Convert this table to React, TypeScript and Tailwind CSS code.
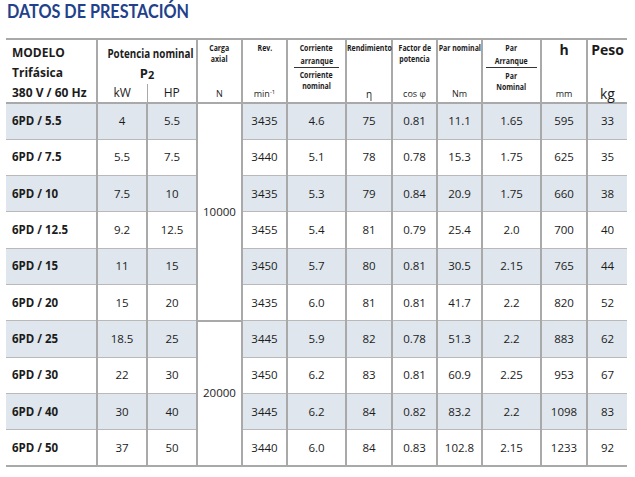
import React from 'react';

type Row = {
  model: string;
  kw: string;
  hp: string;
  rev: string;
  corr: string;
  rend: string;
  cos: string;
  par: string;
  arr: string;
  h: string;
  peso: string;
};

const ROWS: Row[] = [
  { model: '6PD / 5.5', kw: '4', hp: '5.5', rev: '3435', corr: '4.6', rend: '75', cos: '0.81', par: '11.1', arr: '1.65', h: '595', peso: '33' },
  { model: '6PD / 7.5', kw: '5.5', hp: '7.5', rev: '3440', corr: '5.1', rend: '78', cos: '0.78', par: '15.3', arr: '1.75', h: '625', peso: '35' },
  { model: '6PD / 10', kw: '7.5', hp: '10', rev: '3435', corr: '5.3', rend: '79', cos: '0.84', par: '20.9', arr: '1.75', h: '660', peso: '38' },
  { model: '6PD / 12.5', kw: '9.2', hp: '12.5', rev: '3455', corr: '5.4', rend: '81', cos: '0.79', par: '25.4', arr: '2.0', h: '700', peso: '40' },
  { model: '6PD / 15', kw: '11', hp: '15', rev: '3450', corr: '5.7', rend: '80', cos: '0.81', par: '30.5', arr: '2.15', h: '765', peso: '44' },
  { model: '6PD / 20', kw: '15', hp: '20', rev: '3435', corr: '6.0', rend: '81', cos: '0.81', par: '41.7', arr: '2.2', h: '820', peso: '52' },
  { model: '6PD / 25', kw: '18.5', hp: '25', rev: '3445', corr: '5.9', rend: '82', cos: '0.78', par: '51.3', arr: '2.2', h: '883', peso: '62' },
  { model: '6PD / 30', kw: '22', hp: '30', rev: '3450', corr: '6.2', rend: '83', cos: '0.81', par: '60.9', arr: '2.25', h: '953', peso: '67' },
  { model: '6PD / 40', kw: '30', hp: '40', rev: '3445', corr: '6.2', rend: '84', cos: '0.82', par: '83.2', arr: '2.2', h: '1098', peso: '83' },
  { model: '6PD / 50', kw: '37', hp: '50', rev: '3440', corr: '6.0', rend: '84', cos: '0.83', par: '102.8', arr: '2.15', h: '1233', peso: '92' },
];

const vline = 'border-l-2 border-[#a9a9a9]';
const cell = `${vline} text-center align-middle`;

// condensed bold label (the print uses a condensed face)
const Label: React.FC<{ children: React.ReactNode; className?: string }> = ({ children, className = '' }) => (
  <span className={`inline-block whitespace-nowrap scale-x-[0.82] font-bold text-[8.5px] leading-[11px] ${className}`}>
    {children}
  </span>
);

const App: React.FC = () => {
  return (
    <div className="w-[635px] h-[477px] bg-white overflow-hidden font-['Open_Sans',sans-serif] text-[#1c1c1c]">
      <h1 className="pl-[7px] pt-[1px] h-[21px] font-['Lato',sans-serif] text-[18px] leading-[20px] font-bold text-[#22418a]">
        <span className="inline-block whitespace-nowrap origin-left scale-x-[0.9]">DATOS DE PRESTACIÓN</span>
      </h1>

      <table className="ml-[6px] mt-[17px] w-[621px] border-collapse table-fixed border-t-2 border-b-2 border-[#a9a9a9] leading-[14px]">
        <colgroup>
          <col className="w-[91px]" />
          <col className="w-[50px]" />
          <col className="w-[50px]" />
          <col className="w-[45px]" />
          <col className="w-[45px]" />
          <col className="w-[59px]" />
          <col className="w-[46px]" />
          <col className="w-[45px]" />
          <col className="w-[45px]" />
          <col className="w-[59px]" />
          <col className="w-[46px]" />
          <col className="w-[40px]" />
        </colgroup>
        <thead>
          <tr className="h-[43px] align-top">
            <td className="pl-[6px] pt-[3px] text-[12px] leading-[20px] font-bold">
              <div>MODELO</div>
              <div>Trifásica</div>
            </td>
            <td colSpan={2} className={`${vline} text-center pt-[3px]`}>
              <div className="leading-[18px]">
                <Label className="text-[12px] leading-[18px] scale-x-[0.82]">Potencia nominal</Label>
              </div>
              <div className="text-[13px] leading-[20px] font-bold">
                P<span className="text-[11px] relative top-[1px]">2</span>
              </div>
            </td>
            <td className={`${vline} pt-[2px]`}>
              <div className="flex flex-col items-center">
                <Label>Carga</Label>
                <Label>axial</Label>
              </div>
            </td>
            <td className={`${vline} pt-[2px]`}>
              <div className="flex flex-col items-center">
                <Label>Rev.</Label>
              </div>
            </td>
            <td rowSpan={2} className={`${vline} align-top pt-[2px]`}>
              <div className="flex flex-col items-center">
                <Label>Corriente</Label>
                <span className="border-b border-[#333] px-[3px] leading-[11px] pb-[1px]">
                  <Label>arranque</Label>
                </span>
                <Label className="pt-[1px]">Corriente</Label>
                <Label>nominal</Label>
              </div>
            </td>
            <td className={`${vline} pt-[2px]`}>
              <div className="flex flex-col items-center">
                <Label className="scale-x-[0.78]">Rendimiento</Label>
              </div>
            </td>
            <td className={`${vline} pt-[2px]`}>
              <div className="flex flex-col items-center">
                <Label>Factor de</Label>
                <Label>potencia</Label>
              </div>
            </td>
            <td className={`${vline} pt-[2px]`}>
              <div className="flex flex-col items-center">
                <Label className="scale-x-[0.8]">Par nominal</Label>
              </div>
            </td>
            <td rowSpan={2} className={`${vline} align-top pt-[2px]`}>
              <div className="flex flex-col items-center">
                <Label>Par</Label>
                <span className="border-b border-[#333] px-[5px] leading-[11px] pb-[1px]">
                  <Label>Arranque</Label>
                </span>
                <Label className="pt-[2px]">Par</Label>
                <Label>Nominal</Label>
              </div>
            </td>
            <td className={`${vline} text-center pt-[2px]`}>
              <div className="text-[14px] leading-[16px] font-bold">h</div>
            </td>
            <td className={`${vline} text-center pt-[2px]`}>
              <div className="text-[14px] leading-[16px] font-bold">Peso</div>
            </td>
          </tr>
          <tr className="h-[19px] border-b-2 border-[#a9a9a9] text-center align-bottom">
            <td className="pl-[6px] pb-[1px] text-left text-[12px] leading-[17px] font-bold">380 V / 60 Hz</td>
            <td className={`${vline} text-[12px] leading-[17px] pb-[1px]`}>kW</td>
            <td className="border-l border-[#a9a9a9] text-[12px] leading-[17px] pb-[1px]">HP</td>
            <td className={`${vline} text-[9px] leading-[14px] pb-[1px]`}>N</td>
            <td className={`${vline} text-[9px] leading-[14px] pb-[1px]`}>
              min<sup className="text-[6px]">-1</sup>
            </td>
            <td className={`${vline} text-[10px] leading-[14px] pb-[1px]`}>η</td>
            <td className={`${vline} text-[9px] leading-[14px] pb-[1px]`}>cos φ</td>
            <td className={`${vline} text-[9px] leading-[14px] pb-[1px]`}>Nm</td>
            <td className={`${vline} text-[9px] leading-[14px] pb-[1px]`}>mm</td>
            <td className={`${vline} text-[14px] leading-[16px]`}>kg</td>
          </tr>
        </thead>
        <tbody>
          {ROWS.map((r, i) => {
            const shaded = i % 2 === 0;
            const bg = shaded ? 'bg-[#dfe6ed]' : 'bg-white';
            return (
              <tr key={r.model} className={`h-[36.3px] text-[11.5px] ${i > 0 ? 'border-t border-[#b9b9b9]' : ''}`}>
                <td className={`${bg} pl-[6px] font-bold text-[11.5px]`}>{r.model}</td>
                <td className={`${bg} ${cell}`}>{r.kw}</td>
                <td className={`${bg} ${cell}`}>{r.hp}</td>
                {i === 0 && (
                  <td rowSpan={6} className={`bg-white ${cell}`}>
                    10000
                  </td>
                )}
                {i === 6 && (
                  <td rowSpan={4} className={`bg-white ${cell} border-t-2 border-t-[#a9a9a9]`}>
                    20000
                  </td>
                )}
                <td className={`${bg} ${cell}`}>{r.rev}</td>
                <td className={`${bg} ${cell}`}>{r.corr}</td>
                <td className={`${bg} ${cell}`}>{r.rend}</td>
                <td className={`${bg} ${cell}`}>{r.cos}</td>
                <td className={`${bg} ${cell}`}>{r.par}</td>
                <td className={`${bg} ${cell}`}>{r.arr}</td>
                <td className={`${bg} ${cell}`}>{r.h}</td>
                <td className={`${bg} ${cell}`}>{r.peso}</td>
              </tr>
            );
          })}
        </tbody>
      </table>
    </div>
  );
};

export default App;
